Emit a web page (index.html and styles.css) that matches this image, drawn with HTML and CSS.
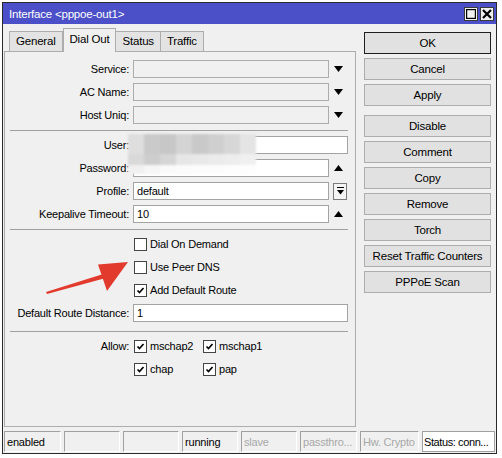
FILE: index.html
```html
<!DOCTYPE html>
<html lang="en">
<head>
  <meta charset="UTF-8">
  <title>Interface &lt;pppoe-out1&gt;</title>
  <link rel="stylesheet" href="styles.css">
</head>
<body>

  <div class="window">
    <div class="titlebar">
      <span class="title">Interface &lt;pppoe-out1&gt;</span>
      <div class="title-btns">
        <span class="tbtn"><svg width="10" height="10" viewBox="0 0 10 10"><rect x="0.5" y="0.5" width="9" height="9" fill="none" stroke="#000" stroke-width="1.4"/></svg></span>
        <span class="tbtn"><svg width="10" height="10" viewBox="0 0 10 10"><path d="M1 1 L9 9 M9 1 L1 9" stroke="#000" stroke-width="2.2"/></svg></span>
      </div>
    </div>

    <div class="content">
      <div class="left">
        <div class="tabs">
          <div class="tab">General</div>
          <div class="tab active">Dial Out</div>
          <div class="tab">Status</div>
          <div class="tab">Traffic</div>
        </div>

        <div class="panel">
          <div class="row">
            <label>Service:</label>
            <div class="field off"></div>
            <span class="suffix"><svg width="9" height="6" viewBox="0 0 9 6"><path d="M0 0 H9 L4.5 6 Z"/></svg></span>
          </div>
          <div class="row">
            <label>AC Name:</label>
            <div class="field off"></div>
            <span class="suffix"><svg width="9" height="6" viewBox="0 0 9 6"><path d="M0 0 H9 L4.5 6 Z"/></svg></span>
          </div>
          <div class="row">
            <label>Host Uniq:</label>
            <div class="field off"></div>
            <span class="suffix"><svg width="9" height="6" viewBox="0 0 9 6"><path d="M0 0 H9 L4.5 6 Z"/></svg></span>
          </div>

          <div class="sep"></div>

          <div class="row">
            <label>User:</label>
            <div class="field"></div>
          </div>
          <div class="row">
            <label>Password:</label>
            <div class="field"></div>
            <span class="suffix"><svg width="9" height="6" viewBox="0 0 9 6"><path d="M0 6 H9 L4.5 0 Z"/></svg></span>
          </div>
          <div class="row">
            <label>Profile:</label>
            <div class="field">default</div>
            <span class="suffix"><span class="dd-btn"><svg width="7" height="8" viewBox="0 0 7 8"><path d="M0 0.5 H7" stroke="#000" stroke-width="1"/><path d="M0 3 H7 L3.5 7.5 Z"/></svg></span></span>
          </div>
          <div class="row">
            <label>Keepalive Timeout:</label>
            <div class="field">10</div>
            <span class="suffix"><svg width="9" height="6" viewBox="0 0 9 6"><path d="M0 6 H9 L4.5 0 Z"/></svg></span>
          </div>

          <div class="sep"></div>

          <div class="row">
            <label></label>
            <span class="check"><span class="box"></span>Dial On Demand</span>
          </div>
          <div class="row">
            <label></label>
            <span class="check"><span class="box"></span>Use Peer DNS</span>
          </div>
          <div class="row">
            <label></label>
            <span class="check"><span class="box on"><svg width="9" height="9" viewBox="0 0 9 9"><path d="M1.5 4.5 L3.5 6.5 L7.5 2" fill="none" stroke="#000" stroke-width="1.7"/></svg></span>Add Default Route</span>
          </div>
          <div class="row">
            <label>Default Route Distance:</label>
            <div class="field">1</div>
          </div>

          <div class="sep wide"></div>

          <div class="row">
            <label>Allow:</label>
            <span class="check cell"><span class="box on"><svg width="9" height="9" viewBox="0 0 9 9"><path d="M1.5 4.5 L3.5 6.5 L7.5 2" fill="none" stroke="#000" stroke-width="1.7"/></svg></span>mschap2</span>
            <span class="check cell"><span class="box on"><svg width="9" height="9" viewBox="0 0 9 9"><path d="M1.5 4.5 L3.5 6.5 L7.5 2" fill="none" stroke="#000" stroke-width="1.7"/></svg></span>mschap1</span>
          </div>
          <div class="row">
            <label></label>
            <span class="check cell"><span class="box on"><svg width="9" height="9" viewBox="0 0 9 9"><path d="M1.5 4.5 L3.5 6.5 L7.5 2" fill="none" stroke="#000" stroke-width="1.7"/></svg></span>chap</span>
            <span class="check cell"><span class="box on"><svg width="9" height="9" viewBox="0 0 9 9"><path d="M1.5 4.5 L3.5 6.5 L7.5 2" fill="none" stroke="#000" stroke-width="1.7"/></svg></span>pap</span>
          </div>

          <!-- pixelated cover over the login values -->
          <div class="mosaic">
            <i style="background:#dedede"></i><i style="background:#cacaca"></i><i style="background:#c7c7c7"></i><i style="background:#d4d4d4"></i><i style="background:#c9c9c9"></i><i style="background:#cfcfcf"></i><i style="background:#d7d7d7"></i><i style="background:#e4e4e4"></i>
            <i style="background:#d9d9d9"></i><i style="background:#cdcdcd"></i><i style="background:#d6d6d6"></i><i style="background:#e6e6e6"></i><i style="background:#e8e8e8"></i><i style="background:#ebebeb"></i><i style="background:#ededed"></i><i style="background:#f0f0f0"></i>
            <i style="background:#f0f0f0"></i><i style="background:#f6f6f6"></i><i style="background:#fafafa"></i><i style="background:#fbfbfb"></i><i style="background:#fcfcfc"></i><i style="background:#fcfcfc"></i><i style="background:#fdfdfd"></i><i style="background:#fdfdfd"></i>
          </div>
        </div>
      </div>

      <div class="side">
        <button class="btn default">OK</button>
        <button class="btn">Cancel</button>
        <button class="btn">Apply</button>
        <button class="btn spaced">Disable</button>
        <button class="btn">Comment</button>
        <button class="btn">Copy</button>
        <button class="btn">Remove</button>
        <button class="btn">Torch</button>
        <button class="btn">Reset Traffic Counters</button>
        <button class="btn">PPPoE Scan</button>
      </div>
    </div>

    <div class="statusbar">
      <span class="cell-s w57">enabled</span>
      <span class="cell-s w56"></span>
      <span class="cell-s w56"></span>
      <span class="cell-s w56">running</span>
      <span class="cell-s w56 dim">slave</span>
      <span class="cell-s w57 dim">passthro...</span>
      <span class="cell-s w59 dim">Hw. Crypto</span>
      <span class="cell-s grow">Status: conn...</span>
    </div>
  </div>

  <svg class="arrow" width="502" height="458" viewBox="0 0 502 458">
    <path d="M46 292 L108 272.5 L109.5 277 L47 294 Z" fill="#e23b2e"/>
    <path d="M128 262 L98 264.5 L107 291 Z" fill="#e23b2e"/>
  </svg>

</body>
</html>
```

FILE: styles.css
```css
body { margin:0; padding:0; background:#fff; font-family:"Liberation Sans", Arial, sans-serif; font-size:11px; letter-spacing:-0.2px; color:#000; position:relative; width:502px; height:458px; overflow:hidden; }

.window { margin:2px 0 0 2px; width:495px; height:452px; box-sizing:border-box; border:1px solid #2a2a2a; background:#f0f0f0; }

.titlebar { height:21px; background:#4b50c8; color:#fff; display:flex; align-items:center; padding-left:6px; font-size:11.5px; }
.title-btns { margin-left:auto; display:flex; gap:2px; padding-right:2px; }
.tbtn { width:14px; height:14px; box-sizing:border-box; border:1px solid #3a3a3a; background:#f0f0f0; display:flex; align-items:center; justify-content:center; }

.content { display:flex; padding-top:4px; }
.left { width:352px; margin-left:1px; }
.side { width:127px; margin-left:8px; padding-top:4px; display:flex; flex-direction:column; gap:4px; }

.tabs { display:flex; align-items:flex-end; height:23px; padding-left:5px; }
.tab { height:20px; box-sizing:border-box; padding:0 6px; line-height:19px; border:1px solid #adadad; border-bottom:none; background:#e3e3e3; font-size:11.5px; }
.tab + .tab { border-left:none; }
.tab.active { height:24px; margin-bottom:-1px; background:#f0f0f0; border-left:1px solid #adadad; position:relative; z-index:1; line-height:20px; }
.tab.active + .tab { border-left:none; }

.panel { position:relative; height:376px; box-sizing:border-box; border:1px solid #adadad; background:#f0f0f0; padding:8px 0 0; display:flex; flex-direction:column; gap:5px; }

.row { display:flex; align-items:center; height:18px; padding:0 7px 0 0; }
.row label { width:128px; flex:none; text-align:right; padding-right:4px; box-sizing:border-box; }
.field { flex:1; height:18px; box-sizing:border-box; border:1px solid #a3a3a3; background:#fff; padding-left:3px; line-height:16px; }
.field.off { background:#f0f0f0; border-color:#acacac; }
.suffix { width:19px; flex:none; display:flex; justify-content:center; align-items:center; }
.dd-btn { width:14px; height:17px; margin-left:3px; box-sizing:border-box; border:1px solid #7a7a7a; background:#f4f4f4; display:flex; align-items:center; justify-content:center; }

.sep { height:1px; background:#a0a0a0; margin:1px 7px 0 5px; }
.sep.wide { margin-top:4px; }

.check { display:flex; align-items:center; gap:3px; margin-left:1px; }
.check.cell { width:68px; flex:none; }
.box { width:13px; height:13px; box-sizing:border-box; border:1px solid #444; background:#fff; display:flex; align-items:center; justify-content:center; }

.mosaic { position:absolute; left:123px; top:82px; width:128px; height:40px; display:grid; grid-template-columns:repeat(8, 1fr); grid-template-rows:20px 11px 9px; filter:blur(1.2px); }

.btn { height:22px; box-sizing:border-box; border:1px solid #adadad; background:#e1e1e1; font-family:inherit; font-size:11.5px; letter-spacing:-0.2px; padding:0; color:#000; }
.btn.default { border:1px solid #1f1f1f; }
.btn.spaced { margin-top:5px; }

.statusbar { margin-top:4px; display:flex; gap:3px; padding-left:1px; height:21px; }
.cell-s { height:21px; box-sizing:border-box; border-top:1px solid #a0a0a0; border-left:1px solid #a0a0a0; border-bottom:1px solid #fff; border-right:1px solid #fff; padding-left:2px; line-height:20px; white-space:nowrap; overflow:hidden; font-size:11px; }
.cell-s.dim { color:#a8a8a8; }
.w56 { width:56px; } .w57 { width:57px; } .w59 { width:59px; }
.cell-s.grow { width:73px; padding-left:1px; letter-spacing:-0.4px; background:#fff; border-color:#a0a0a0; }

.arrow { position:absolute; left:0; top:0; pointer-events:none; }
```
